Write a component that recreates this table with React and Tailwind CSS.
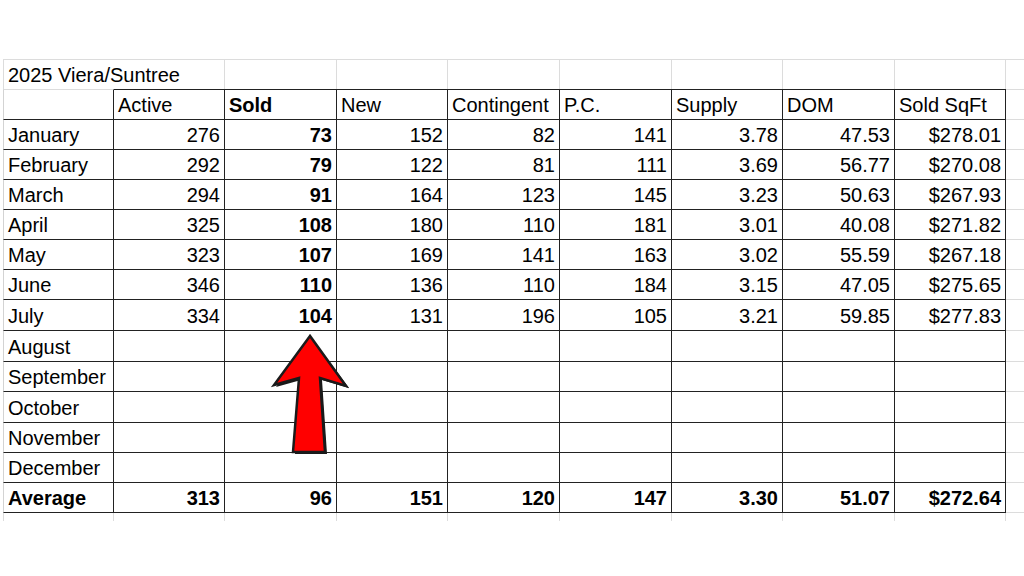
import React from 'react';

const DATA = [
  ['January', '276', '73', '152', '82', '141', '3.78', '47.53', '$278.01'],
  ['February', '292', '79', '122', '81', '111', '3.69', '56.77', '$270.08'],
  ['March', '294', '91', '164', '123', '145', '3.23', '50.63', '$267.93'],
  ['April', '325', '108', '180', '110', '181', '3.01', '40.08', '$271.82'],
  ['May', '323', '107', '169', '141', '163', '3.02', '55.59', '$267.18'],
  ['June', '346', '110', '136', '110', '184', '3.15', '47.05', '$275.65'],
  ['July', '334', '104', '131', '196', '105', '3.21', '59.85', '$277.83'],
  ['August', '', '', '', '', '', '', '', ''],
  ['September', '', '', '', '', '', '', '', ''],
  ['October', '', '', '', '', '', '', '', ''],
  ['November', '', '', '', '', '', '', '', ''],
  ['December', '', '', '', '', '', '', '', ''],
];

const AVERAGE = ['Average', '313', '96', '151', '120', '147', '3.30', '51.07', '$272.64'];
const HEADERS = ['', 'Active', 'Sold', 'New', 'Contingent', 'P.C.', 'Supply', 'DOM', 'Sold SqFt'];

// body row heights so the lines land on the sheet's pixel grid
const HEIGHTS = ['h-[30px]', 'h-[30px]', 'h-[30px]', 'h-[30px]', 'h-[30px]', 'h-[30px]', 'h-[31px]', 'h-[31px]', 'h-[30px]', 'h-[31px]', 'h-[30px]', 'h-[30px]', 'h-[30px]'];

const cellText = 'flex items-end px-[4px] pb-[2px] leading-[23px] text-[20px] whitespace-nowrap text-black';

const Arrow = () => (
  <svg className="absolute left-[260px] top-[325px]" width="100" height="135" viewBox="0 0 100 135">
    <polygon points="52,13 89,63 62,55 67,129 35,129 41,55 16,62" fill="#1a1a1a" />
    <polygon
      points="50,11 14,60 39,53 33,127 65,127 60,53 86,61"
      fill="#ff0000"
      stroke="#1a1a1a"
      strokeWidth="2.5"
      strokeLinejoin="miter"
    />
  </svg>
);

const BodyRow = ({ row, height, bold }) => (
  <>
    {row.map((v, i) => {
      const border = i === 0
        ? 'border-l border-r border-b border-l-[#d3d3d3] border-r-[#222] border-b-[#222]'
        : 'border-r border-b border-[#222]';
      const align = i === 0 ? 'justify-start' : 'justify-end';
      const weight = bold || i === 2 ? 'font-bold' : 'font-normal';
      return (
        <div key={i} className={`${cellText} ${height} ${border} ${align} ${weight}`}>
          {v}
        </div>
      );
    })}
    <div className={`${height} border-b border-[#dcdcdc]`} />
  </>
);

export default function App() {
  return (
    <div className="relative w-[1024px] h-[576px] bg-white overflow-hidden pt-[59px] pl-[3px] font-['Liberation_Sans',Arial,sans-serif]">
      <div className="grid grid-cols-[111px_111px_112px_111px_112px_112px_111px_112px_111px_18px]">
        {/* title row */}
        <div className={`${cellText} col-span-2 h-[30px] border-l border-t border-r border-[#dcdcdc]`}>
          2025 Viera/Suntree
        </div>
        {[2, 3, 4, 5, 6, 7, 8].map((i) => (
          <div key={i} className="h-[30px] border-t border-r border-[#dcdcdc]" />
        ))}
        <div className="h-[30px] border-t border-[#dcdcdc]" />

        {/* header row */}
        {HEADERS.map((h, i) => {
          const border = i === 0
            ? 'border-l border-t border-r border-b border-l-[#d3d3d3] border-t-[#dcdcdc] border-r-[#222] border-b-[#222]'
            : 'border-t border-r border-b border-[#222]';
          return (
            <div key={i} className={`${cellText} h-[31px] justify-start ${border} ${i === 2 ? 'font-bold' : 'font-normal'}`}>
              {h}
            </div>
          );
        })}
        <div className="h-[31px] border-t border-b border-[#dcdcdc]" />

        {DATA.map((row, r) => (
          <BodyRow key={row[0]} row={row} height={HEIGHTS[r]} />
        ))}
        <BodyRow row={AVERAGE} height={HEIGHTS[12]} bold />

        {/* faint grid below the table */}
        <div className="h-[8px] border-l border-r border-[#dcdcdc]" />
        {[1, 2, 3, 4, 5, 6, 7, 8].map((i) => (
          <div key={i} className="h-[8px] border-r border-[#dcdcdc]" />
        ))}
        <div className="h-[8px]" />
      </div>
      <Arrow />
    </div>
  );
}
